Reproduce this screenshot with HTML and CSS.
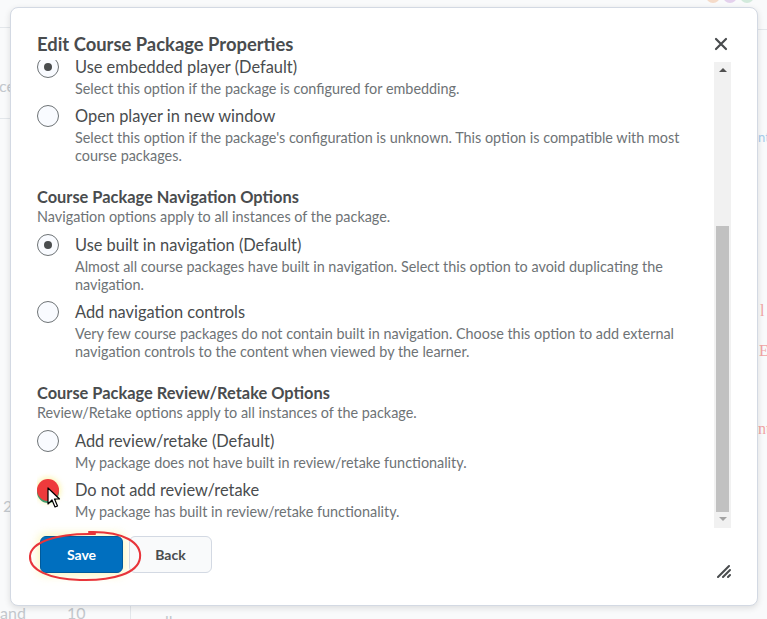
FILE: index.html
```html
<!DOCTYPE html>
<html lang="en">
<head>
<meta charset="utf-8">
<title>Edit Course Package Properties</title>
<link rel="stylesheet" href="styles.css">
</head>
<body>
<div class="page">
  <span class="bg bg-brand">LEARN</span>
  <span class="bg bg-logo"><i class="c1"></i><i class="c2"></i><i class="c3"></i></span>
  <span class="bg bg-line l1"></span>
  <span class="bg bg-line l2"></span>
  <span class="bg bg-line l3"></span>
  <span class="bg bg-vline"></span>
  <span class="bg bg-text t-ce">ce</span>
  <span class="bg bg-text t-2">2</span>
  <span class="bg bg-text t-and">and</span>
  <span class="bg bg-text t-10">10</span>
  <span class="bg bg-text t-ll">ll</span>
  <span class="bg bg-blue t-nt">nt</span>
  <span class="bg bg-red t-l">l</span>
  <span class="bg bg-red t-e">E</span>
  <span class="bg bg-red t-nt2">nt</span>
</div>

<div class="dialog" role="dialog" aria-label="Edit Course Package Properties">
  <div class="dialog-header">
    <h1 class="dialog-title">Edit Course Package Properties</h1>
    <button class="close" aria-label="Close">
      <svg width="14" height="14" viewBox="0 0 14 14"><path d="M2 2 L12 12 M12 2 L2 12" stroke="#494c4e" stroke-width="2.2" stroke-linecap="round"/></svg>
    </button>
  </div>

  <div class="dialog-body">
    <div class="scroll-view">
      <div class="scroll-content">
        <div class="option">
          <span class="radio checked"></span>
          <div class="option-text">
            <div class="option-label">Use embedded player (Default)</div>
            <div class="option-desc">Select this option if the package is configured for embedding.</div>
          </div>
        </div>
        <div class="option">
          <span class="radio"></span>
          <div class="option-text">
            <div class="option-label">Open player in new window</div>
            <div class="option-desc">Select this option if the package's configuration is unknown. This option is compatible with most course packages.</div>
          </div>
        </div>

        <h2 class="section-title">Course Package Navigation Options</h2>
        <p class="section-sub">Navigation options apply to all instances of the package.</p>
        <div class="option">
          <span class="radio checked"></span>
          <div class="option-text">
            <div class="option-label">Use built in navigation (Default)</div>
            <div class="option-desc">Almost all course packages have built in navigation. Select this option to avoid duplicating the navigation.</div>
          </div>
        </div>
        <div class="option">
          <span class="radio"></span>
          <div class="option-text">
            <div class="option-label">Add navigation controls</div>
            <div class="option-desc">Very few course packages do not contain built in navigation. Choose this option to add external navigation controls to the content when viewed by the learner.</div>
          </div>
        </div>

        <h2 class="section-title">Course Package Review/Retake Options</h2>
        <p class="section-sub">Review/Retake options apply to all instances of the package.</p>
        <div class="option">
          <span class="radio"></span>
          <div class="option-text">
            <div class="option-label">Add review/retake (Default)</div>
            <div class="option-desc">My package does not have built in review/retake functionality.</div>
          </div>
        </div>
        <div class="option">
          <span class="radio marked">
            <svg class="cursor" width="14" height="22" viewBox="0 0 14 22"><path d="M1 1 L1 17 L5 13 L8 20 L10.5 19 L7.5 12 L12.5 12 Z" fill="#fff" stroke="#000" stroke-width="1.2" stroke-linejoin="round"/></svg>
          </span>
          <div class="option-text">
            <div class="option-label">Do not add review/retake</div>
            <div class="option-desc">My package has built in review/retake functionality.</div>
          </div>
        </div>
      </div>
    </div>
    <div class="scrollbar">
      <span class="sb-arrow up"></span>
      <div class="sb-track"><div class="sb-thumb"></div></div>
      <span class="sb-arrow down"></span>
    </div>
  </div>

  <div class="dialog-footer">
    <button class="btn btn-primary">Save</button>
    <button class="btn btn-secondary">Back</button>
  </div>

  <svg class="annotation" width="118" height="56" viewBox="0 0 118 56">
    <path d="M62 3 C 97 2, 115 14, 113 29 C 111 44, 86 52, 53 51 C 22 50, 2 41, 3 27 C 4 14, 27 4, 68 5" fill="none" stroke="#e8343a" stroke-width="2" stroke-linecap="round"/>
  </svg>

  <svg class="resize" width="14" height="14" viewBox="0 0 14 14"><path d="M1 13 L12 2 M6 13 L13 6 M11 13 L13 11" stroke="#494c4e" stroke-width="2" stroke-linecap="round"/></svg>
</div>
</body>
</html>
```

FILE: styles.css
```css
* { box-sizing: border-box; }

html, body {
  margin: 0;
  width: 767px;
  height: 619px;
  overflow: hidden;
}

body {
  background: #f9fafb;
  font-family: Lato, "Open Sans", "Liberation Sans", sans-serif;
  color: #494c4e;
  position: relative;
}

/* background page fragments, under the modal */
.page { position: relative; width: 767px; height: 619px; }
.bg { position: absolute; }
.bg-brand { left: 2px; top: -20px; font-size: 20px; font-weight: 700; color: #d4d8dc; letter-spacing: 1px; }
.bg-logo { left: 706px; top: -11px; width: 52px; height: 14px; display: flex; gap: 3px; opacity: 0.6; }
.bg-logo i { display: block; width: 14px; height: 14px; border-radius: 50%; }
.bg-logo .c1 { background: #f3c7a8; }
.bg-logo .c2 { background: #d7b7e4; }
.bg-logo .c3 { background: #b9e0c8; }
.bg-line { height: 1px; background: #e3e7eb; }
.l1 { left: 0; top: 27px; width: 10px; }
.l2 { left: 0; top: 118px; width: 10px; }
.l3 { left: 758px; top: 29px; width: 9px; }
.bg-vline { left: 130px; top: 605px; width: 1px; height: 14px; background: #e3e7eb; }
.bg-text { color: #c3c8cd; font-size: 16px; }
.t-ce { left: -1px; top: 76px; }
.t-2 { left: 3px; top: 496px; }
.t-and { left: 0; top: 603px; }
.t-10 { left: 67px; top: 603px; }
.t-ll { left: 165px; top: 611px; }
.bg-blue { color: #a7cdeb; font-size: 13px; left: 758px; top: 129px; }
.bg-red { color: #f1a5a5; font-family: "Liberation Serif", serif; font-size: 16px; }
.t-l { left: 760px; top: 302px; }
.t-e { left: 759px; top: 342px; }
.t-nt2 { left: 758px; top: 420px; }

/* modal dialog overlays the page */
.dialog {
  position: absolute;
  left: 10px;
  top: 7px;
  width: 748px;
  height: 599px;
  background: #fff;
  border: 1px solid #d3d9e3;
  border-radius: 8px;
  box-shadow: 0 2px 6px rgba(0, 0, 0, 0.12);
  display: flex;
  flex-direction: column;
}

.dialog-header {
  display: flex;
  align-items: flex-start;
  justify-content: space-between;
  padding: 24px 29px 0 26px;
  height: 52px;
}

.dialog-title {
  margin: 0;
  font-size: 18.4px;
  line-height: 24px;
  font-weight: 700;
  color: #494c4e;
}

.close {
  border: 0;
  background: none;
  padding: 0;
  margin-top: 5px;
  width: 14px;
  height: 14px;
  display: flex;
}

.dialog-body {
  display: flex;
  height: 468px;
  padding-left: 26px;
  padding-right: 26px;
}

.scroll-view {
  flex: 1;
  overflow: hidden;
}

.scroll-content {
  margin-top: -4px;
  padding-right: 16px;
}

.option {
  display: grid;
  grid-template-columns: 22px 1fr;
  column-gap: 16px;
  margin-bottom: 7px;
}

.radio {
  width: 22px;
  height: 22px;
  border-radius: 50%;
  border: 1px solid #6e7376;
  background: #f9fbff;
  display: flex;
  align-items: center;
  justify-content: center;
  position: relative;
}

.radio.checked::after {
  content: "";
  width: 8px;
  height: 8px;
  border-radius: 50%;
  background: #494c4e;
}

.radio.marked {
  border: 0;
  background: #ee3a3c;
  box-shadow: 0 2px 0 #3d9a6d, 0 0 5px 2px rgba(250, 240, 140, 0.6);
}

.cursor {
  position: absolute;
  left: 10px;
  top: 8px;
}

.option-label {
  font-size: 16.4px;
  line-height: 22px;
  color: #494c4e;
}

.option-desc {
  margin-top: 2px;
  font-size: 14.4px;
  line-height: 18px;
  color: #6e7376;
}

.section-title {
  margin: 21px 0 0;
  font-size: 16.4px;
  line-height: 22px;
  font-weight: 700;
  color: #494c4e;
}

.section-sub {
  margin: 0 0 8px;
  font-size: 14.4px;
  line-height: 18px;
  color: #6e7376;
}

.scrollbar {
  width: 17px;
  margin-top: 2px;
  background: #f1f1f1;
  display: flex;
  flex-direction: column;
  align-items: center;
}

.sb-arrow {
  width: 0;
  height: 0;
  border-left: 4px solid transparent;
  border-right: 4px solid transparent;
  margin: 6px 0;
}
.sb-arrow.up { border-bottom: 4px solid #505050; }
.sb-arrow.down { border-top: 4px solid #a3a3a3; margin-top: 5px; margin-bottom: 7px; }

.sb-track {
  flex: 1;
  width: 100%;
  display: flex;
  flex-direction: column;
  justify-content: flex-end;
  padding: 0 2px;
}

.sb-thumb {
  height: 286px;
  background: #c1c1c1;
}

.dialog-footer {
  display: flex;
  gap: 6px;
  padding: 8px 0 0 29px;
}

.btn {
  height: 37px;
  width: 83px;
  border-radius: 6px;
  font-family: Lato, "Open Sans", "Liberation Sans", sans-serif;
  font-size: 14px;
  font-weight: 700;
  padding: 0;
}

.btn-primary {
  background: #006fbf;
  border: 1px solid #005a9c;
  color: #fff;
  box-shadow: 0 0 8px 3px rgba(250, 240, 150, 0.55);
}

.btn-secondary {
  background: #f9fafb;
  border: 1px solid #d3d9e3;
  color: #494c4e;
}

.annotation {
  position: absolute;
  left: 16px;
  top: 521px;
}

.resize {
  position: absolute;
  right: 26px;
  bottom: 27px;
}
```
